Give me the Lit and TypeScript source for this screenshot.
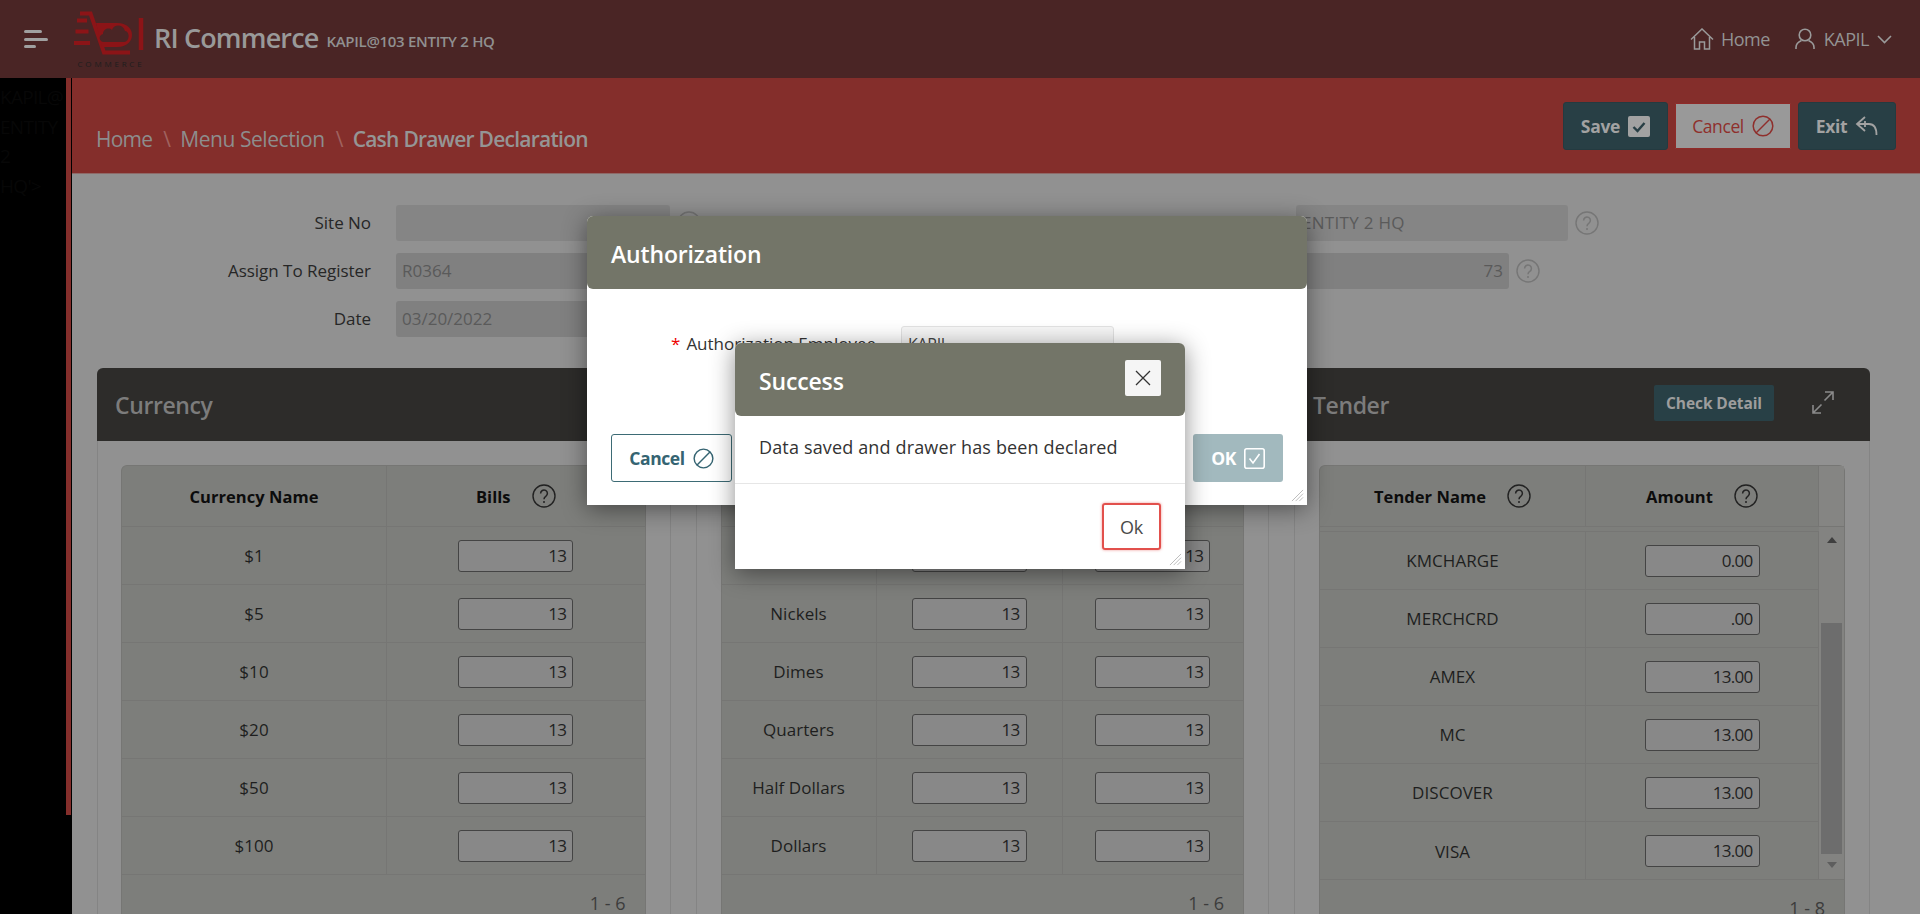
import { LitElement, html, css } from "lit";
import { customElement } from "lit/decorators.js";

const help = () => html`<svg class="help" viewBox="0 0 24 24"><circle cx="12" cy="12" r="11" fill="none" stroke="currentColor" stroke-width="1.4"/><path d="M8.6 9.4a3.4 3.4 0 1 1 5.2 2.9c-1.2.8-1.8 1.4-1.8 2.9" fill="none" stroke="currentColor" stroke-width="1.5"/><circle cx="12" cy="18" r="1" fill="currentColor"/></svg>`;
const grip = () => html`<svg class="grip" viewBox="0 0 14 14"><path d="M1 13 13 1M5 13l8-8M9 13l4-4" stroke="#b9b9b9" stroke-width="1" fill="none"/></svg>`;
const ban = (w: number) => html`<svg class="ico" width="${w}" height="${w}" viewBox="0 0 22 22"><circle cx="11" cy="11" r="9.8" fill="none" stroke="currentColor" stroke-width="1.5"/><path d="M4 18 18 4" stroke="currentColor" stroke-width="1.5"/></svg>`;

@customElement("app-root")
export class AppRoot extends LitElement {
  static styles = css`
    :host { display: block; position: relative; width: 100%; height: 914px; overflow: hidden; background: #919191; font-family: "Open Sans", "Liberation Sans", sans-serif; color: #222; }
    * { box-sizing: border-box; }
    .top { height: 78px; background: #4a2525; display: flex; align-items: center; color: #969696; }
    .burger { margin-left: 24px; width: 24px; display: flex; flex-direction: column; gap: 4.5px; }
    .burger i { display: block; height: 3px; border-radius: 2px; background: #a0a0a0; }
    .burger i:nth-child(1) { width: 18px; } .burger i:nth-child(2) { width: 24px; } .burger i:nth-child(3) { width: 12px; }
    .logo { margin-left: 24px; width: 78px; height: 78px; flex: none; display: flex; flex-direction: column; align-items: center; }
    .logo svg { width: 78px; height: 58px; flex: none; }
    .logo span { font-size: 8px; letter-spacing: 2.8px; color: #1e1e1e; line-height: 10px; margin-top: 1px; white-space: nowrap; }
    .brand { margin-left: 4px; margin-top: -4px; font-size: 27px; font-weight: 600; letter-spacing: -0.85px; color: #999; }
    .sub { margin-left: 8px; margin-top: 3px; font-size: 15px; font-weight: 600; letter-spacing: -0.3px; color: #909090; }
    .nav { margin-left: auto; margin-right: 28px; display: flex; align-items: center; font-size: 18px; letter-spacing: -0.5px; color: #939393; }
    .nav svg { flex: none; }
    .nav .home { margin-left: 7px; margin-right: 25px; }
    .nav .user { margin-left: 9px; margin-right: 8px; }
    .main { display: flex; height: 836px; }
    .side { width: 72px; flex: none; background: #000; display: grid; grid-template-columns: 66px 5px; align-items: start; overflow: hidden; }
    .side p { margin: 5px 0 0; font-size: 19px; letter-spacing: -0.7px; line-height: 29.5px; color: #070707; width: 66px; white-space: nowrap; }
    .side p span { display: block; }
    .strip { height: 737px; background: #842e2b; }
    .content { flex: 1; min-width: 0; }
    .head { height: 96px; background: #842e2b; display: flex; align-items: flex-start; justify-content: space-between; padding: 24px 24px 0 24px; border-bottom: 1px solid #8f6a68; }
    .crumbs { margin-top: 22px; font-size: 21px; letter-spacing: -0.75px; color: #8d8d8d; display: flex; line-height: 30px; }
    .crumbs i { font-style: normal; color: #a0625f; margin: 0 10px 0 11px; }
    .crumbs .mid { letter-spacing: -0.45px; }
    .crumbs b { font-weight: 600; color: #959595; }
    .acts { display: flex; gap: 7px; align-items: center; }
    .btn { height: 48px; border: 1px solid #243a40; border-radius: 3px; background: #283f45; color: #a2a2a2; display: flex; align-items: center; justify-content: center; gap: 8px; font-size: 17.5px; font-weight: 700; letter-spacing: -0.3px; }
    .btn.save { width: 105px; } .btn.exit { width: 98px; }
    .btn.can { width: 116px; height: 46px; background: #999; border-color: #8f2b29; color: #8f2f2c; font-weight: 400; border-radius: 1px; letter-spacing: -0.4px; }
    .body { padding: 31px 50px 0 25px; }
    .form { display: grid; grid-template-columns: 274px 274px 1fr 272px 31px 271px; row-gap: 12px; height: 132px; }
    .lbl { grid-column: 1; text-align: right; font-size: 17px; letter-spacing: -0.03px; line-height: 36px; color: #262626; height: 36px; width: 274px; }
    .inp { height: 36px; border-radius: 3px; background: #808080; font-size: 17px; line-height: 36px; padding-left: 6px; color: #5a5a5a; letter-spacing: 0; white-space: nowrap; flex: none; }
    .inp.l { width: 274px; margin-left: 25px; }
    .inp.first { background: #858585; }
    .inp.wide { width: 272px; background: #858585; letter-spacing: 0.3px; }
    .inp.n { width: 213px; text-align: right; padding-right: 6px; }
    .help { width: 24px; height: 24px; flex: none; color: #222; }
    .form .help { color: #767676; margin-left: 7px; }
    .leftrow { grid-column: 2 / 4; display: flex; align-items: center; }
    .rightrow { grid-column: 4 / 6; display: flex; align-items: center; }
    .cards { margin-top: 31px; display: grid; grid-template-columns: repeat(3, 1fr); gap: 25px; }
    .card { border: 1px solid #848484; border-top: 0; border-radius: 6px 6px 0 0; height: 560px; }
    .card > header { margin: 0 -1px; height: 73px; background: #2d2c2a; border-radius: 6px 6px 0 0; display: flex; align-items: center; padding: 0 21px 0 18px; font-size: 23px; font-weight: 600; letter-spacing: -0.4px; color: #7c7c7c; }
    .tname { margin-left: 1px; }
    .chk { margin-left: auto; margin-top: -3px; width: 120px; height: 36px; background: #284046; border-radius: 2px; color: #9d9d9d; font-size: 15.5px; font-weight: 700; letter-spacing: -0.1px; display: flex; align-items: center; justify-content: center; }
    .exp { margin-left: 38px; margin-right: 15px; margin-top: -5px; flex: none; }
    .tbl { margin: 24px 24px 0; background: #7d7e7b; border: 1px solid #767674; border-bottom: 0; border-radius: 6px 6px 0 0; height: 460px; }
    .card.first .tbl { margin-left: 23px; }
    .row { display: grid; height: 58px; border-bottom: 1px solid #767674; }
    .row.h { height: 61px; }
    .row > div { display: flex; align-items: center; justify-content: center; border-right: 1px solid #767674; font-size: 17px; letter-spacing: 0.05px; color: #1e1e1e; }
    .row > div:last-child { border-right: 0; }
    .row.h > div { font-weight: 700; color: #0c0c0c; gap: 21px; font-size: 16.5px; letter-spacing: 0.05px; }
    .c1 { grid-template-columns: 265px 1fr; }
    .c2 { grid-template-columns: 155px 186px 1fr; }
    .c3 { grid-template-columns: 266px 233px 1fr; }
    .num { width: 115px; height: 32px; background: #888; border: 1px solid #444; border-radius: 3px; text-align: right; padding: 0 6px; font-size: 17px; line-height: 30px; color: #222; letter-spacing: -0.7px; }
    .foot { text-align: right; padding: 14px 19px 0 0; font-size: 18px; color: #3c3c3c; line-height: 28px; }
    .split { display: flex; height: 353px; border-bottom: 1px solid #767674; }
    .rows { flex: 1; padding-top: 5px; min-width: 0; }
    .rows .rule { border-top: 1px solid #767674; margin-top: -1px; }
    .rows .row > div { border-right: 1px solid #767674; }
    .rows .row:last-child { border-bottom: 0; }
    .rows .row { grid-template-columns: 266px 233px; }
    .corner { background: #858583; }
    .sb { width: 25px; flex: none; background: #838381; display: flex; flex-direction: column; align-items: center; padding: 10px 2px 0; }
    .sb i { display: block; width: 0; height: 0; border-left: 5.5px solid transparent; border-right: 5.5px solid transparent; }
    .sb .up { border-bottom: 6px solid #3f3f3f; }
    .sb .thumb { width: 21px; height: 231px; margin: 80px 0 8px; background: #6d6d6d; }
    .sb .dn { border-top: 6px solid #5e5e5e; }
    .modal { position: absolute; background: #fff; border-radius: 6px 6px 0 0; box-shadow: 0 4px 24px rgba(0,0,0,.45); color: #333; }
    .auth { left: 587px; top: 216px; width: 720px; height: 289px; }
    .succ { left: 735px; top: 343px; width: 450px; height: 226px; }
    .mh { height: 73px; background: #737568; border-radius: 6px; display: flex; align-items: center; padding: 2px 24px 0; color: #fff; font-size: 23px; font-weight: 600; letter-spacing: -0.15px; justify-content: space-between; }
    .x { width: 36px; height: 36px; margin-top: -5px; background: #f5f5f5; border-radius: 2px; display: flex; align-items: center; justify-content: center; }
    .af { display: flex; align-items: flex-start; padding-top: 37px; height: 145px; }
    .af .al { margin-left: 84px; font-size: 17px; letter-spacing: 0; color: #333; line-height: 36px; white-space: nowrap; width: 230px; }
    .af .al em { color: #e00; font-style: normal; margin-right: 6px; }
    .af .ai { width: 213px; height: 36px; border: 1px solid #e2e2e2; background: #f6f6f6; border-radius: 3px; font-size: 16px; line-height: 34px; padding-left: 6px; letter-spacing: -0.3px; color: #444; }
    .afoot { display: flex; justify-content: space-between; padding: 0 24px; }
    .mb { height: 48px; border-radius: 3px; display: flex; align-items: center; justify-content: center; gap: 8px; font-size: 17.5px; font-weight: 700; letter-spacing: -0.4px; }
    .mb.c { width: 121px; background: #fff; border: 1px solid #3d6b75; color: #356472; }
    .mb.o { width: 90px; background: #a2b9be; color: #fff; }
    .msg { height: 68px; padding: 18px 24px 0; font-size: 18px; letter-spacing: 0.15px; color: #333; line-height: 26px; border-bottom: 1px solid #e6e6e6; white-space: nowrap; }
    .sf { display: flex; justify-content: flex-end; padding: 19px 24px 0; }
    .ok { width: 59px; height: 47px; border: 2px solid #e2504c; border-radius: 3px; box-shadow: 0 0 3px rgba(226,80,76,.6); display: flex; align-items: center; justify-content: center; font-size: 18px; color: #4a4a4a; letter-spacing: -0.3px; }
    .grip { position: absolute; right: 3px; bottom: 3px; width: 13px; height: 13px; }
  `;

  private input(v: string) { return html`<span class="num">${v}</span>`; }

  render() {
    const c1 = ["$1", "$5", "$10", "$20", "$50", "$100"];
    const c2 = ["", "Nickels", "Dimes", "Quarters", "Half Dollars", "Dollars"];
    const c3 = [["KMCHARGE","0.00"],["MERCHCRD",".00"],["AMEX","13.00"],["MC","13.00"],["DISCOVER","13.00"],["VISA","13.00"]];
    return html`
      <div class="top">
        <div class="burger"><i></i><i></i><i></i></div>
        <div class="logo">
          <svg viewBox="72 0 78 58" fill="none" stroke="#8c1417" stroke-width="4">
            <path d="M80 13.500h10.500L104 52.500h26"/>
            <path d="M77 20.500h10M75.500 31.500h13M74 43h16"/>
            <path d="M96 23h21c10 0 15 6 15 12s-5 12-15 12h-15z" fill="#8c1417" stroke="none"/>
            <path d="M104 42c-5 0-6-7-1-8 0-5 6-7 9-4 2-6 11-6 13 1 5 0 5 11-1 11z" fill="#4a2525" stroke="none"/>
            <path d="M141 18v32" stroke-width="4.500"/>
          </svg>
          <span>COMMERCE</span>
        </div>
        <div class="brand">RI Commerce</div>
        <div class="sub">KAPIL@103 ENTITY 2 HQ</div>
        <div class="nav">
          <svg width="24" height="22" viewBox="0 0 24 22" fill="none" stroke="#9a9a9a" stroke-width="1.500"><path d="M1 11.500 12 1l11 10.500M4.500 9v12h5v-7h5v7h5V9"/></svg>
          <span class="home">Home</span>
          <svg width="20" height="22" viewBox="0 0 20 22" fill="none" stroke="#9a9a9a" stroke-width="1.600"><circle cx="10" cy="7" r="5.800"/><path d="M1 21v-1.500C1 16 4 13.500 6.500 12.500M19 21v-1.500C19 16 16 13.500 13.500 12.500"/></svg>
          <span class="user">KAPIL</span>
          <svg width="15" height="9" viewBox="0 0 15 9" fill="none" stroke="#9a9a9a" stroke-width="1.600"><path d="m1 1 6.500 6.500L14 1"/></svg>
        </div>
      </div>
      <div class="main">
        <div class="side"><p><span>KAPIL@</span><span>ENTITY</span><span>2</span><span>HQ'></span></p><div class="strip"></div></div>
        <div class="content">
          <div class="head">
            <div class="crumbs"><span>Home</span><i>\\</i><span class="mid">Menu Selection</span><i>\\</i><b>Cash Drawer Declaration</b></div>
            <div class="acts">
              <div class="btn save">Save <svg width="22" height="21" viewBox="0 0 22 21"><rect width="22" height="21" rx="2" fill="#a2a2a2"/><path d="m5.500 11 4 4 7-8" fill="none" stroke="#283f45" stroke-width="2.400"/></svg></div>
              <div class="btn can">Cancel ${ban(22)}</div>
              <div class="btn exit">Exit <svg width="23" height="20" viewBox="0 0 23 20" fill="none" stroke="#a2a2a2" stroke-width="1.800"><path d="M10 1 2 8l8 7M2 8h12c5 0 7.500 3.500 7.500 11"/><path d="M10 5v6"/></svg></div>
            </div>
          </div>
          <div class="body">
            <div class="form">
              <div class="lbl">Site No</div>
              <div class="leftrow"><div class="inp l first"></div>${help()}</div>
              <div class="rightrow"><div class="inp wide">ENTITY 2 HQ</div>${help()}</div>
              <div class="lbl">Assign To Register</div>
              <div class="leftrow"><div class="inp l">R0364</div></div>
              <div class="rightrow"><div class="inp n">73</div>${help()}</div>
              <div class="lbl">Date</div>
              <div class="leftrow"><div class="inp l">03/20/2022</div></div>
            </div>
            <div class="cards">
              <section class="card first">
                <header>Currency</header>
                <div class="tbl">
                  <div class="row h c1"><div>Currency Name</div><div>Bills ${help()}</div></div>
                  ${c1.map(n => html`<div class="row c1"><div>${n}</div><div>${this.input("13")}</div></div>`)}
                  <div class="foot">1 - 6</div>
                </div>
              </section>
              <section class="card">
                <header></header>
                <div class="tbl">
                  <div class="row h c2"><div></div><div></div><div></div></div>
                  ${c2.map(n => html`<div class="row c2"><div>${n}</div><div>${this.input("13")}</div><div>${this.input("13")}</div></div>`)}
                  <div class="foot">1 - 6</div>
                </div>
              </section>
              <section class="card">
                <header><span class="tname">Tender</span>
                  <div class="chk">Check Detail</div>
                  <svg class="exp" width="22" height="23" viewBox="0 0 22 23" fill="none" stroke="#8a8a8a" stroke-width="1.600"><path d="M13 1h8v8M21 1 12.500 9.500M1 14v8h8M1 22l8.500-8.500"/></svg>
                </header>
                <div class="tbl">
                  <div class="row h c3"><div>Tender Name ${help()}</div><div>Amount ${help()}</div><div class="corner"></div></div>
                  <div class="split">
                    <div class="rows">
                      <div class="rule"></div>
                      ${c3.map(r => html`<div class="row"><div>${r[0]}</div><div>${this.input(r[1])}</div></div>`)}
                    </div>
                    <div class="sb"><i class="up"></i><div class="thumb"></div><i class="dn"></i></div>
                  </div>
                  <div class="foot">1 - 8</div>
                </div>
              </section>
            </div>
          </div>
        </div>
      </div>

      <div class="modal auth">
        <div class="mh">Authorization</div>
        <div class="af"><div class="al"><em>*</em>Authorization Employee</div><div class="ai">KAPIL</div></div>
        <div class="afoot">
          <div class="mb c">Cancel ${ban(21)}</div>
          <div class="mb o">OK <svg width="21" height="21" viewBox="0 0 21 21" fill="none" stroke="#fff" stroke-width="1.600"><rect x=".8" y=".8" width="19.400" height="19.400" rx="2"/><path d="m5.500 10.500 3.500 4.500 6.500-9"/></svg></div>
        </div>
        ${grip()}
      </div>

      <div class="modal succ">
        <div class="mh">Success
          <div class="x"><svg width="16" height="16" viewBox="0 0 16 16" stroke="#333" stroke-width="1.300"><path d="m1 1 14 14M15 1 1 15"/></svg></div>
        </div>
        <div class="msg">Data saved and drawer has been declared</div>
        <div class="sf"><div class="ok">Ok</div></div>
        ${grip()}
      </div>
    `;
  }
}
